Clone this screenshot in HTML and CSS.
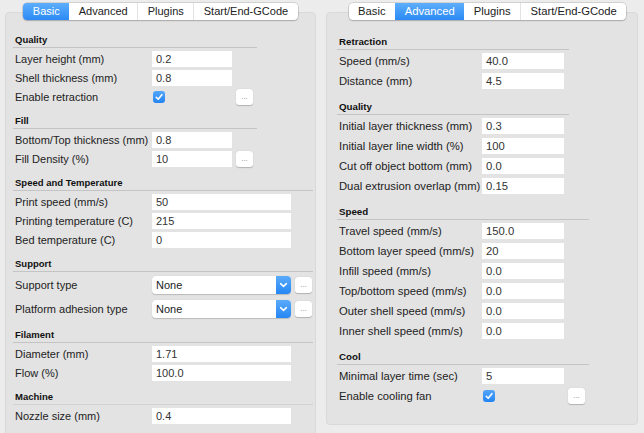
FILE: index.html
```html
<!DOCTYPE html>
<html>
<head>
<meta charset="utf-8">
<link rel="stylesheet" href="styles.css">
</head>
<body>
<div class="column column-basic">
  <div class="tabs">
    <span class="tab active">Basic</span><span class="tab">Advanced</span><span class="tab">Plugins</span><span class="tab">Start/End-GCode</span>
  </div>
  <div class="panel">
    <section class="section">
      <div class="heading">Quality</div>
      <div class="rows">
        <div class="row"><span class="label">Layer height (mm)</span><span class="field">0.2</span></div>
        <div class="row"><span class="label">Shell thickness (mm)</span><span class="field">0.8</span></div>
        <div class="row"><span class="label">Enable retraction</span><span class="check-cell"><span class="checkbox"><svg width="12" height="12" viewBox="0 0 12 12"><polyline points="3.2,6.3 5.2,8.3 8.9,3.7" fill="none" stroke="#fff" stroke-width="1.6" stroke-linecap="round" stroke-linejoin="round"/></svg></span></span><span class="more">...</span></div>
      </div>
    </section>
    <section class="section">
      <div class="heading">Fill</div>
      <div class="rows">
        <div class="row"><span class="label">Bottom/Top thickness (mm)</span><span class="field">0.8</span></div>
        <div class="row"><span class="label">Fill Density (%)</span><span class="field">10</span><span class="more">...</span></div>
      </div>
    </section>
    <section class="section">
      <div class="heading wide">Speed and Temperature</div>
      <div class="rows">
        <div class="row"><span class="label">Print speed (mm/s)</span><span class="field long">50</span></div>
        <div class="row"><span class="label">Printing temperature (C)</span><span class="field long">215</span></div>
        <div class="row"><span class="label">Bed temperature (C)</span><span class="field long">0</span></div>
      </div>
    </section>
    <section class="section">
      <div class="heading wide">Support</div>
      <div class="rows selects">
        <div class="row select-row"><span class="label">Support type</span><span class="select"><span class="select-text">None</span><span class="select-arrow"><svg width="15" height="18" viewBox="0 0 15 18"><path d="M4.6 7.6 L7.5 10.4 L10.4 7.6" fill="none" stroke="#fff" stroke-width="1.5" stroke-linecap="round" stroke-linejoin="round"/></svg></span></span><span class="more">...</span></div>
        <div class="row select-row"><span class="label">Platform adhesion type</span><span class="select"><span class="select-text">None</span><span class="select-arrow"><svg width="15" height="18" viewBox="0 0 15 18"><path d="M4.6 7.6 L7.5 10.4 L10.4 7.6" fill="none" stroke="#fff" stroke-width="1.5" stroke-linecap="round" stroke-linejoin="round"/></svg></span></span><span class="more">...</span></div>
      </div>
    </section>
    <section class="section">
      <div class="heading wide">Filament</div>
      <div class="rows">
        <div class="row"><span class="label">Diameter (mm)</span><span class="field long">1.71</span></div>
        <div class="row"><span class="label">Flow (%)</span><span class="field long">100.0</span></div>
      </div>
    </section>
    <section class="section">
      <div class="heading wide faint">Machine</div>
      <div class="rows">
        <div class="row"><span class="label">Nozzle size (mm)</span><span class="field long">0.4</span></div>
      </div>
    </section>
  </div>
</div>

<div class="column column-advanced">
  <div class="tabs">
    <span class="tab">Basic</span><span class="tab active">Advanced</span><span class="tab">Plugins</span><span class="tab">Start/End-GCode</span>
  </div>
  <div class="panel">
    <section class="section">
      <div class="heading">Retraction</div>
      <div class="rows">
        <div class="row"><span class="label">Speed (mm/s)</span><span class="field">40.0</span></div>
        <div class="row"><span class="label">Distance (mm)</span><span class="field">4.5</span></div>
      </div>
    </section>
    <section class="section">
      <div class="heading">Quality</div>
      <div class="rows">
        <div class="row"><span class="label">Initial layer thickness (mm)</span><span class="field">0.3</span></div>
        <div class="row"><span class="label">Initial layer line width (%)</span><span class="field">100</span></div>
        <div class="row"><span class="label">Cut off object bottom (mm)</span><span class="field">0.0</span></div>
        <div class="row"><span class="label">Dual extrusion overlap (mm)</span><span class="field">0.15</span></div>
      </div>
    </section>
    <section class="section">
      <div class="heading wide">Speed</div>
      <div class="rows">
        <div class="row"><span class="label">Travel speed (mm/s)</span><span class="field">150.0</span></div>
        <div class="row"><span class="label">Bottom layer speed (mm/s)</span><span class="field">20</span></div>
        <div class="row"><span class="label">Infill speed (mm/s)</span><span class="field">0.0</span></div>
        <div class="row"><span class="label">Top/bottom speed (mm/s)</span><span class="field">0.0</span></div>
        <div class="row"><span class="label">Outer shell speed (mm/s)</span><span class="field">0.0</span></div>
        <div class="row"><span class="label">Inner shell speed (mm/s)</span><span class="field">0.0</span></div>
      </div>
    </section>
    <section class="section">
      <div class="heading wide">Cool</div>
      <div class="rows">
        <div class="row"><span class="label">Minimal layer time (sec)</span><span class="field">5</span></div>
        <div class="row"><span class="label">Enable cooling fan</span><span class="check-cell"><span class="checkbox"><svg width="12" height="12" viewBox="0 0 12 12"><polyline points="3.2,6.3 5.2,8.3 8.9,3.7" fill="none" stroke="#fff" stroke-width="1.6" stroke-linecap="round" stroke-linejoin="round"/></svg></span></span><span class="more">...</span></div>
      </div>
    </section>
  </div>
</div>
</body>
</html>
```

FILE: styles.css
```css
* { box-sizing: border-box; }

html, body {
  margin: 0;
  height: 433px;
  overflow: hidden;
}

body {
  display: flex;
  align-items: flex-start;
  gap: 10px;
  padding-left: 5px;
  background: #ececec;
  font-family: "Liberation Sans", Arial, sans-serif;
  color: #222;
}

.column {
  display: flex;
  flex-direction: column;
  padding-top: 3px;
  flex: none;
}

.column-basic {
  width: 311px;
  height: 433px;
  overflow: hidden;
  font-size: 11px;
  --label-w: 137px;
  --field-w: 80px;
  --row-gap: 3px;
  --section-gap: 9px;
  --narrow: 244px;
  --wide: 300px;
}

.column-advanced {
  width: 312px;
  font-size: 11.25px;
  --label-w: 143px;
  --field-w: 82px;
  --row-gap: 4px;
  --section-gap: 11px;
  --narrow: 232px;
  --wide: 252px;
}

/* Segmented tab control */
.tabs {
  align-self: center;
  flex: none;
  display: flex;
  height: 17px;
  background: #fff;
  border-radius: 4px;
  box-shadow: 0 0 0 0.5px rgba(0, 0, 0, 0.22), 0 1px 1.5px rgba(0, 0, 0, 0.16);
  position: relative;
  z-index: 1;
  overflow: hidden;
}

.column-advanced .tabs { margin-left: 11px; }

.tab {
  padding: 0 9.5px;
  line-height: 17px;
  color: #222;
  white-space: nowrap;
}

.tab + .tab { border-left: 1px solid #e3e3e3; }
.tab.active,
.tab.active + .tab { border-left: none; }

.tab.active {
  background: linear-gradient(#5eaefb, #2b8af5);
  color: #fff;
}

/* Group box */
.panel {
  flex: none;
  margin-top: -8px;
  background: #e3e3e3;
  border: 1px solid #d9d9d9;
  border-radius: 4px;
  padding: 20px 0 30px 7px;
}

.column-advanced .panel { padding: 22px 0 20px 10px; }

.section + .section { margin-top: var(--section-gap); }

.heading {
  width: var(--narrow);
  font-weight: bold;
  font-size: 0.865em;
  line-height: 14px;
  padding-left: 2px;
  border-bottom: 1px solid #c4c4c4;
  color: #111;
}

.heading.wide { width: var(--wide); }
.heading.faint { border-bottom-color: #d2d2d2; }

.rows {
  display: flex;
  flex-direction: column;
  gap: var(--row-gap);
  padding: 3px 0 0 2px;
}

.rows.selects { gap: 4px; }

.row {
  display: flex;
  align-items: center;
  height: 16px;
}

.row.select-row { height: 20px; }

.label {
  width: var(--label-w);
  flex: none;
  white-space: nowrap;
}

.field {
  width: var(--field-w);
  height: 16px;
  flex: none;
  background: #fff;
  padding-left: 4px;
  line-height: 16px;
  color: #333;
}

.field.long { width: 139px; }

.check-cell {
  width: var(--field-w);
  flex: none;
  display: flex;
  padding-left: 1px;
}

.checkbox {
  width: 12px;
  height: 12px;
  border-radius: 3px;
  background: linear-gradient(#53a6f9, #2384f3);
  display: flex;
}

.more {
  margin-left: 4px;
  width: 17px;
  height: 16px;
  flex: none;
  background: #fff;
  border-radius: 3px;
  box-shadow: 0 0.5px 1px rgba(0, 0, 0, 0.22);
  font-size: 8px;
  line-height: 16px;
  text-align: center;
  color: #888;
}

.select {
  width: 139px;
  height: 18px;
  flex: none;
  display: flex;
  background: #fff;
  border-radius: 4px;
  box-shadow: 0 0.5px 1px rgba(0, 0, 0, 0.18);
  overflow: hidden;
}

.select-text {
  flex: 1;
  padding-left: 4px;
  line-height: 18px;
  color: #222;
}

.select-arrow {
  width: 15px;
  display: flex;
  background: linear-gradient(#5aabfa, #2586f4);
}
```
